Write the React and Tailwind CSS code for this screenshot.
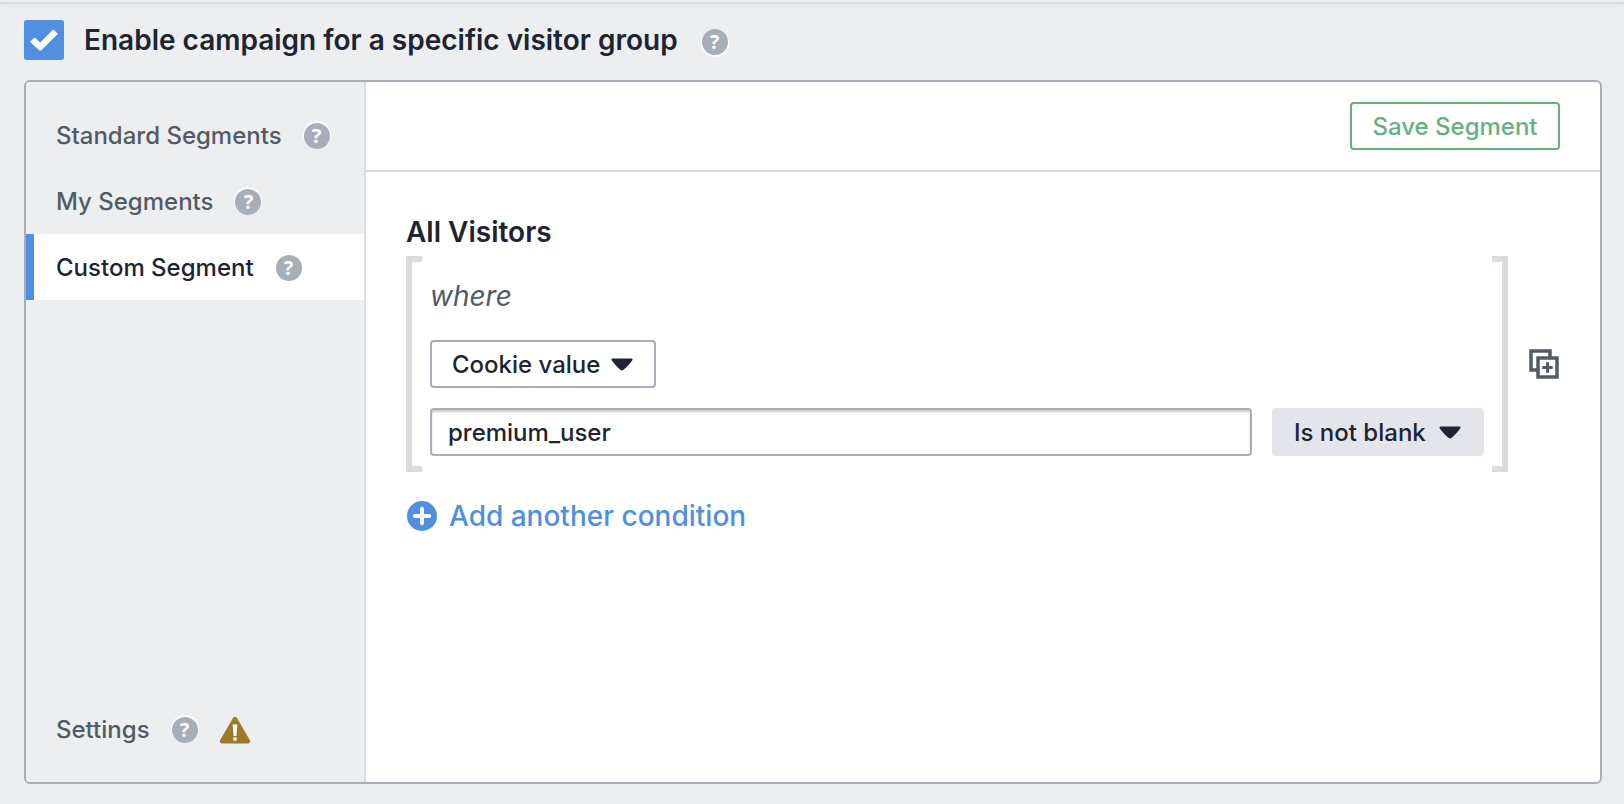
import { useState } from "react";

function CheckMark() {
  return (
    <svg viewBox="0 0 28 22" className="pointer-events-none absolute h-[22px] w-7" aria-hidden="true">
      <path
        d="M0.7 12.2 3.9 9a1 1 0 0 1 1.4 0l4.900 4.600L22.6 1a1 1 0 0 1 1.400 0l3.300 3.200a1 1 0 0 1 0 1.400L12.200 20.500a2.800 2.800 0 0 1-3.900 0L.7 13.600a1 1 0 0 1 0-1.400Z"
        fill="#fff"
      />
    </svg>
  );
}

function Help({ topic, className = "" }) {
  return (
    <button
      type="button"
      aria-label={`Help: ${topic}`}
      className={`flex size-[26px] shrink-0 items-center justify-center rounded-full bg-[#a7adb9] font-['Noto_Sans',sans-serif] text-xl leading-none font-bold text-white ${className}`}
    >
      ?
    </button>
  );
}

function Caret({ className }) {
  return (
    <svg viewBox="0 0 22 13" className={`pointer-events-none absolute h-[13px] w-[22px] ${className}`} aria-hidden="true">
      <path
        d="M1.6.5h18.8c1.1 0 1.5 1 .8 1.9-2.600 3.500-5.400 6.600-8.700 9.400-.9.800-2.100.800-3 0C6.200 9 3.400 5.900.8 2.400.1 1.500.5.5 1.600.5Z"
        fill="#202432"
      />
    </svg>
  );
}

function Warning() {
  return (
    <svg viewBox="0 0 30 27" className="h-[27px] w-[30px] shrink-0" role="img" aria-label="Warning">
      <path
        d="M12.700 1.400c1.100-1.800 3.500-1.800 4.600 0l12.300 21.400c1 1.800.2 3.700-1.900 3.700H2.300c-2.100 0-2.900-1.900-1.900-3.700Z"
        fill="#9c7a29"
      />
      <path d="M12.600 7.400h4.800l-1 11.600h-2.800Z" fill="#fff" />
      <circle cx="15" cy="21.900" r="2" fill="#fff" />
    </svg>
  );
}

function PlusCircle() {
  return (
    <svg viewBox="0 0 30 30" className="size-[30px] shrink-0" aria-hidden="true">
      <circle cx="15" cy="15" r="15" fill="#508fdf" />
      <path d="M15 7.800v14.400M7.800 15h14.400" stroke="#fff" strokeWidth="4" strokeLinecap="round" />
    </svg>
  );
}

function DuplicateIcon() {
  return (
    <svg viewBox="0 0 32 32" className="size-8" fill="none" stroke="#515b65" aria-hidden="true">
      <path d="M10 22H3V3h19v7" strokeWidth="3.500" />
      <rect x="10" y="10" width="19" height="19" strokeWidth="3.500" />
      <path d="M19.500 14.300v10.400M14.300 19.500h10.400" strokeWidth="3" />
    </svg>
  );
}

const segments = [
  { id: "standard", label: "Standard Segments" },
  { id: "mine", label: "My Segments" },
  { id: "custom", label: "Custom Segment" },
];

export default function App() {
  const [enabled, setEnabled] = useState(true);
  const [active, setActive] = useState("custom");
  const [value, setValue] = useState("premium_user");

  return (
    <div className="flex min-h-screen flex-col bg-[#edeef0] font-[Inter,sans-serif] text-[#202432]">
      <div className="mt-0.5 h-0.5 bg-[#d9dce3] shadow-[0_2px_4px_rgba(0,0,0,0.08)]" />

      <div className="flex items-center px-6 py-4">
        <span className="relative flex size-10 items-center justify-center">
          <input
            id="enable"
            type="checkbox"
            checked={enabled}
            onChange={(e) => setEnabled(e.target.checked)}
            className="size-10 appearance-none rounded-xs border-2 border-[#a7adb9] bg-white checked:border-[#508fdf] checked:bg-[#508fdf]"
          />
          {enabled && <CheckMark />}
        </span>
        <label htmlFor="enable" className="ml-5 text-[28px] leading-10 font-semibold">
          Enable campaign for a specific visitor group
        </label>
        <Help topic="visitor group" className="mt-1 ml-6 shadow-[0_1px_0_1px_#fff]" />
      </div>

      <div className="mx-[22px] mt-1 mb-5 ml-6 flex flex-1 overflow-hidden rounded-md border-2 border-[#a7adb9] bg-white">
        <nav className="flex w-[340px] shrink-0 flex-col border-r-2 border-[#d9dce1] bg-[#edeef0] py-5 text-2xl font-medium text-[#515b65]">
          {segments.map((s) => (
            <div
              key={s.id}
              className={`flex h-[66px] items-center gap-[22px] border-l-8 pt-0.5 pl-[22px] ${
                s.id === active ? "border-[#508fdf] bg-white text-[#202432]" : "border-transparent"
              }`}
            >
              <button type="button" onClick={() => setActive(s.id)}>
                {s.label}
              </button>
              <Help topic={s.label} className="shadow-[0_-1px_0_1px_#fff]" />
            </div>
          ))}
          <div className="mt-auto flex h-[66px] items-center gap-[22px] border-l-8 border-transparent pt-0.5 pl-[22px]">
            <button type="button">Settings</button>
            <Help topic="Settings" className="shadow-[0_-1px_0_1px_#fff]" />
            <Warning />
          </div>
        </nav>

        <main className="min-w-0 flex-1">
          <header className="flex justify-end border-b-2 border-[#d9dce1] px-10 py-5">
            <button
              type="button"
              className="h-12 w-[210px] rounded-sm border-2 border-[#65b17e] pt-0.5 text-2xl font-medium text-[#65b17e]"
            >
              Save Segment
            </button>
          </header>

          <section className="px-10 pt-10">
            <h2 className="text-[28px] leading-10 font-semibold">All Visitors</h2>

            <div className="mt-1 flex items-center gap-5">
              <div className="flex min-w-0 flex-1">
                <div className="w-4 shrink-0 border-6 border-r-0 border-[#d9dce1]" />
                <div className="min-w-0 flex-1 px-2 pt-5 pb-4">
                  <p className="text-[28px] leading-10 text-[#515b65] italic">where</p>
                  <div className="relative mt-6 w-[226px]">
                    <select
                      aria-label="Condition type"
                      className="h-12 w-full appearance-none rounded-sm border-2 border-[#a7adb9] bg-white pt-0.5 pl-5 text-2xl font-medium"
                    >
                      <option>Cookie value</option>
                    </select>
                    <Caret className="top-[18px] right-[23px]" />
                  </div>
                  <div className="mt-5 flex gap-5">
                    <input
                      aria-label="Cookie name"
                      value={value}
                      onChange={(e) => setValue(e.target.value)}
                      className="h-12 min-w-0 flex-1 rounded-sm border-2 border-[#a7adb9] bg-white px-4 text-2xl font-medium shadow-[inset_0_2px_2px_rgba(0,0,0,0.2)]"
                    />
                    <div className="relative w-[212px] shrink-0">
                      <select
                        aria-label="Comparison"
                        className="h-12 w-full appearance-none rounded-sm bg-[#e4e5ea] pt-0.5 pl-[22px] text-2xl font-medium"
                      >
                        <option>Is not blank</option>
                      </select>
                      <Caret className="top-[18px] right-[23px]" />
                    </div>
                  </div>
                </div>
                <div className="w-4 shrink-0 border-6 border-l-0 border-[#d9dce1]" />
              </div>
              <button type="button" aria-label="Duplicate condition group">
                <DuplicateIcon />
              </button>
            </div>

            <button
              type="button"
              className="mt-6 flex items-center gap-3 pl-px text-[28px] leading-10 font-medium text-[#508fdf]"
            >
              <PlusCircle />
              Add another condition
            </button>
          </section>
        </main>
      </div>
    </div>
  );
}
